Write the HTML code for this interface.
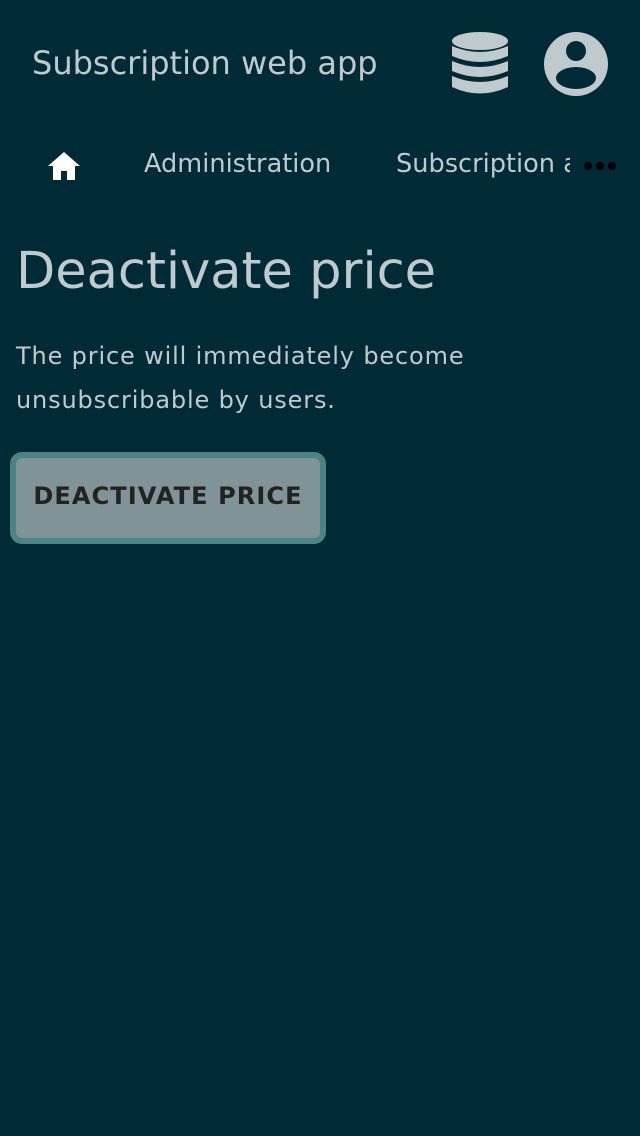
<!DOCTYPE html><html><head><style>
body{margin:0;width:640px;height:1136px;background:#002b36;font-family:"DejaVu Sans","Liberation Sans",sans-serif;color:#bfcacc;position:relative;overflow:hidden}
.a{position:absolute;white-space:nowrap}
</style></head><body>
<div class="a" style="left:32px;top:44px;font-size:32px">Subscription web app</div>
<svg class="a" style="left:452px;top:32px" width="56" height="64" viewBox="0 0 56 64" fill="#bfcacc">
<ellipse cx="28" cy="9" rx="28" ry="9"/>
<path d="M0 14 Q28 26 56 14 V24 Q28 36 0 24Z"/>
<path d="M0 29 Q28 41 56 29 V39 Q28 51 0 39Z"/>
<path d="M0 44 Q28 56 56 44 V55 Q28 68 0 55Z"/>
</svg>
<svg class="a" style="left:544px;top:32px" width="64" height="64" viewBox="0 0 64 64">
<circle cx="32" cy="32" r="32" fill="#bfcacc"/>
<circle cx="32" cy="19" r="10" fill="#002b36"/>
<ellipse cx="32" cy="46" rx="20" ry="11" fill="#002b36"/>
</svg>
<svg class="a" style="left:48px;top:152px" width="32" height="28" viewBox="0 0 32 28" fill="#fff">
<path d="M16 0 L32 14 H27 V28 H19 V19 H13 V28 H5 V14 H0Z"/>
</svg>
<div class="a" style="left:144px;top:149px;font-size:25.6px">Administration</div>
<div class="a" style="left:396px;top:149px;font-size:25.6px;width:174px;overflow:hidden">Subscription app</div>
<svg class="a" style="left:583px;top:160px" width="34" height="12"><circle cx="5" cy="6" r="4"/><circle cx="17" cy="6" r="4"/><circle cx="29" cy="6" r="4"/></svg>
<div class="a" style="left:16px;top:242px;font-size:51px">Deactivate price</div>
<div class="a" style="left:16px;top:334px;font-size:24px;letter-spacing:0.85px;line-height:44px;white-space:normal;width:560px">The price will immediately become<br>unsubscribable by users.</div>
<div class="a" style="left:10px;top:452px;width:304px;height:80px;border:6px solid #4a8584;border-radius:12px;background:#7f9398;color:#222;font-weight:bold;font-size:24px;letter-spacing:1.1px;text-align:center;line-height:76px">DEACTIVATE PRICE</div>
</body></html>
